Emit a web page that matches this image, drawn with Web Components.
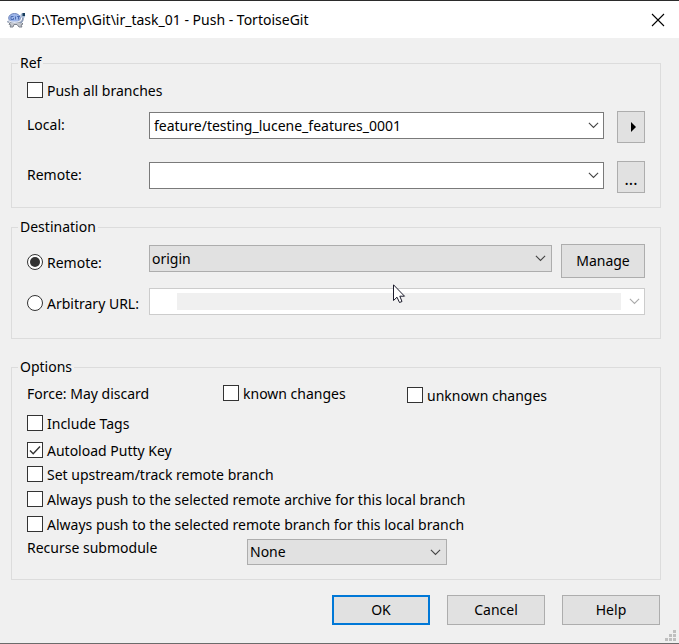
<!DOCTYPE html>
<html lang="en">
<head>
<meta charset="utf-8">
<title>Push - TortoiseGit</title>
<style>
  html, body { height: 100%; margin: 0; }
  body { font: 14px/18px "Noto Sans", "Open Sans", sans-serif; color: #000; background: #f0f0f0; }
</style>
</head>
<body>
<dialog-window heading="D:\Temp\Git\ir_task_01 - Push - TortoiseGit">
  <group-box label="Ref">
    <check-item label="Push all branches"></check-item>
    <field-stack style="--gap:18px; --top:11px; --bottom:14px">
      <combo-field label="Local:" value="feature/testing_lucene_features_0001" editable>
        <push-button slot="after" kind="arrow"></push-button>
      </combo-field>
      <combo-field label="Remote:" value="" editable>
        <push-button slot="after" kind="more">...</push-button>
      </combo-field>
    </field-stack>
  </group-box>

  <group-box label="Destination">
    <field-stack style="--gap:9px; --top:0px; --bottom:22px">
      <combo-field value="origin" name="Remote">
        <radio-item slot="label" label="Remote:" checked></radio-item>
        <push-button slot="after" kind="wide">Manage</push-button>
      </combo-field>
      <combo-field value="" name="Arbitrary URL" editable inactive>
        <radio-item slot="label" label="Arbitrary URL:"></radio-item>
      </combo-field>
    </field-stack>
  </group-box>

  <group-box label="Options">
    <push-options></push-options>
  </group-box>

  <push-button slot="actions" kind="action" primary>OK</push-button>
  <push-button slot="actions" kind="action">Cancel</push-button>
  <push-button slot="actions" kind="action">Help</push-button>
</dialog-window>
<mouse-pointer></mouse-pointer>

<script>
const chevron = '<svg class="chev" width="11" height="7" viewBox="0 0 11 7" fill="none" stroke="currentColor" stroke-width="1.1" aria-hidden="true"><path d="M.9 .9 5.5 5.5 10.1 .9"/></svg>';

class Base extends HTMLElement {
  connectedCallback() {
    this.attachShadow({ mode: 'open' }).innerHTML =
      `<style>*{box-sizing:border-box}button,input,select{font:inherit;color:inherit;margin:0;border-radius:0}${this.css()}</style>${this.html()}`;
    this.ready();
  }
  attr(n) { return this.getAttribute(n) || ''; }
  ready() {}
}

customElements.define('dialog-window', class extends Base {
  css() { return `
    :host{display:flex;flex-direction:column;min-height:100vh;box-sizing:border-box;border-top:1px solid #2b2b2b;border-bottom:1px solid #6b6b6b;background:#f0f0f0}
    header{display:flex;align-items:center;height:37px;padding:0 14px 0 6px;background:#fff}
    h1{flex:1;margin:0 0 0 5px;font-size:14px;font-weight:400;white-space:nowrap}
    header button{display:flex;padding:0;border:0;background:none}
    main{display:flex;flex-direction:column;padding:16px 18px 0 11px}
    footer{display:flex;justify-content:flex-end;gap:17px;padding:15px 19px 0 0}
    .grip{align-self:flex-end;margin:auto 3px 2px 0}`; }
  html() { return `
    <header>
      <svg width="20" height="18" viewBox="0 0 20 18" aria-hidden="true">
        <path d="M1 10.500 3 9l1 2-2 1z" fill="#8a96ad"/>
        <path d="M4 11.500 3 13.500l2 .5-1 2h3l1-2.500h3l2 2.500h3l-1-2 2-1-2-2z" fill="#c3c6cd" stroke="#737985" stroke-width=".9"/>
        <path d="M14 11.500c2.500-.5 3-2 3-5" fill="none" stroke="#8e9db9" stroke-width="1.800"/>
        <ellipse cx="8.500" cy="7" rx="5.800" ry="4.500" fill="#9db6ea" stroke="#6f85bb"/>
        <path d="M2 9.500q6.500 3.500 13 0" fill="none" stroke="#e3e8f2" stroke-width="1.400"/>
        <path d="M7.500 5.500H5v3h2.500V7M9.500 5.500v3M11 5.500h3M12.500 5.500v3" fill="none" stroke="#4565ad" stroke-width=".9"/>
        <ellipse cx="16.800" cy="4.500" rx="2.400" ry="2.500" fill="#a9bbd4"/>
        <path d="M16.500 2H19v3h-2.500z" fill="#173c5c"/>
      </svg>
      <h1>${this.attr('heading')}</h1>
      <button type="button" aria-label="Close"><svg width="14" height="14" viewBox="0 0 14 14" stroke="#000" stroke-width="1.100"><path d="M1 1 13 13M13 1 1 13"/></svg></button>
    </header>
    <main><slot></slot></main>
    <footer><slot name="actions"></slot></footer>
    <svg class="grip" width="11" height="11" viewBox="0 0 11 11" fill="#bfbfbf" aria-hidden="true"><path d="M8 0h3v3H8zM4 4h3v3H4zM8 4h3v3H8zM0 8h3v3H0zM4 8h3v3H4zM8 8h3v3H8z"/></svg>`; }
});

customElements.define('group-box', class extends Base {
  css() { return `
    :host{display:block}
    :host(:nth-of-type(2)){margin-top:10px}
    :host(:nth-of-type(3)){margin-top:19px}
    fieldset{margin:0;padding:8px 15px 0;border:1px solid #dcdcdc;min-width:0}
    :host(:first-of-type) fieldset{padding-top:10px}
    legend{margin-left:-9px;padding:0 2px}`; }
  html() { return `<fieldset><legend>${this.attr('label')}</legend><slot></slot></fieldset>`; }
});

customElements.define('field-stack', class extends Base {
  css() { return `:host{display:grid;gap:var(--gap);padding:var(--top) 0 var(--bottom)}`; }
  html() { return `<slot></slot>`; }
});

const tickCss = `
  label{display:flex;align-items:flex-start;gap:4px;white-space:nowrap}
  input{appearance:none;flex:none;width:16px;height:16px;border:1px solid #333;background:#fff}
  .tick{display:grid}.tick>*{grid-area:1/1}
  svg{visibility:hidden;pointer-events:none}input:checked+svg{visibility:visible}`;

customElements.define('check-item', class extends Base {
  css() { return `:host{display:block}${tickCss}`; }
  html() { return `<label><span class="tick"><input type="checkbox" ${this.hasAttribute('checked') ? 'checked' : ''}>
    <svg width="16" height="16" viewBox="0 0 16 16" fill="none" stroke="#333" stroke-width="1.400"><path d="M3 8.500 6.200 11.700 13 4.500"/></svg></span>${this.attr('label')}</label>`; }
});

customElements.define('radio-item', class extends Base {
  css() { return `:host{display:block;padding-top:4px}${tickCss}input{border-radius:50%}`; }
  html() { return `<label><span class="tick"><input type="radio" ${this.hasAttribute('checked') ? 'checked' : ''}>
    <svg width="16" height="16" viewBox="0 0 16 16"><circle cx="8" cy="8" r="5" fill="#333"/></svg></span>${this.attr('label')}</label>`; }
  ready() {
    this.shadowRoot.querySelector('input').addEventListener('change', () => {
      for (const other of document.querySelectorAll('radio-item'))
        if (other !== this) other.shadowRoot.querySelector('input').checked = false;
    });
  }
});

const comboCss = `
  .box{position:relative;display:flex;flex:1;min-width:0;height:27px;border:1px solid #7a7a7a;background:#fff}
  .box>input{flex:1;min-width:0;padding:0 4px;border:0;background:none}
  .box>button{display:flex;align-items:center;justify-content:center;width:20px;padding:0;border:0;background:none;color:#444}
  .box>select{appearance:none;width:100%;padding:0 24px 0 2px;border:0;background:none}
  .box>.chev{position:absolute;right:5px;top:9px;color:#444;pointer-events:none}
  .pick{border-color:#adadad;background:#e1e1e1}`;

customElements.define('combo-field', class extends Base {
  css() { return `
    :host{display:flex;align-items:flex-start}
    :host(:not([editable])),:host([inactive]){align-items:center}
    .caption{flex:none;width:122px}
    .caption label{display:block;padding-top:5px}
    .wrap{display:flex;flex:1;align-self:flex-start;min-width:0;padding:1px 0}
    :host([inactive]) .box{border-color:#ccc}
    :host([inactive]) .box>input{margin:4px 3px 4px 27px;background:#f0f0f0}
    :host([inactive]) .box>button{color:#aaa}
    ${comboCss}`; }
  html() {
    const name = this.attr('name');
    const aria = name ? `aria-label="${name}"` : '';
    const off = this.hasAttribute('inactive') ? 'disabled' : '';
    const control = this.hasAttribute('editable')
      ? `<div class="box"><input id="c" type="text" value="${this.attr('value')}" ${aria} ${off}><button type="button" aria-label="Show list" ${off}>${chevron}</button></div>`
      : `<div class="box pick"><select id="c" ${aria}><option>${this.attr('value')}</option></select>${chevron}</div>`;
    return `<div class="caption"><slot name="label"><label for="c">${this.attr('label')}</label></slot></div><div class="wrap">${control}</div><slot name="after"></slot>`;
  }
});

customElements.define('push-options', class extends Base {
  css() { return `
    :host{display:block;padding-bottom:14px}
    .force{display:grid;grid-template-columns:196px 184px 1fr;height:31px;align-items:start}
    .force>*{padding-top:1px}
    .force>:last-child{padding-top:3px}
    .list{display:grid;grid-template-rows:27px 24px 25px 25px 23px;align-items:start}
    .recurse{display:flex;align-items:flex-start}
    .recurse label{width:220px}
    .recurse .box{flex:0 1 200px;height:26px}
    ${comboCss}
    .recurse .box{flex:0 1 200px;height:26px}`; }
  html() { return `
    <div class="force" role="group" aria-label="Force: May discard">
      <span>Force: May discard</span>
      <check-item label="known changes"></check-item>
      <check-item label="unknown changes"></check-item>
    </div>
    <div class="list">
      <check-item label="Include Tags"></check-item>
      <check-item label="Autoload Putty Key" checked></check-item>
      <check-item label="Set upstream/track remote branch"></check-item>
      <check-item label="Always push to the selected remote archive for this local branch"></check-item>
      <check-item label="Always push to the selected remote branch for this local branch"></check-item>
    </div>
    <div class="recurse"><label for="r">Recurse submodule</label><div class="box pick"><select id="r"><option>None</option></select>${chevron}</div></div>`; }
});

customElements.define('push-button', class extends Base {
  css() { return `
    :host{display:block}
    :host([slot=after][kind=arrow]),:host([slot=after][kind=more]){margin-left:13px}
    :host([kind=wide]){margin-left:9px}
    button{display:flex;align-items:center;justify-content:center;width:28px;height:32px;padding:0;border:1px solid #adadad;background:#e1e1e1}
    :host([kind=arrow]) button{padding-left:5px}
    :host([kind=more]) button{padding-top:4px;font-size:16px}
    :host([kind=wide]) button{width:84px;height:34px}
    :host([kind=action]) button{width:98px;height:30px}
    :host([primary]) button{border:2px solid #0078d7}`; }
  html() { return this.attr('kind') === 'arrow'
    ? `<button type="button" aria-label="Push options"><svg width="5" height="10" viewBox="0 0 5 10"><path d="M0 0 5 5 0 10z"/></svg></button>`
    : `<button type="button"><slot></slot></button>`; }
});

customElements.define('mouse-pointer', class extends Base {
  css() { return `:host{position:absolute;left:393px;top:284px;pointer-events:none}svg{display:block}`; }
  html() { return `<svg width="13" height="20" viewBox="0 0 13 20" aria-hidden="true"><path d="M.5 .8V16.500L4 13.200 6.500 18.500 9 17.500 6.800 12.200H11.500z" fill="#fff" stroke="#1b1b2b"/></svg>`; }
});
</script>
</body>
</html>
